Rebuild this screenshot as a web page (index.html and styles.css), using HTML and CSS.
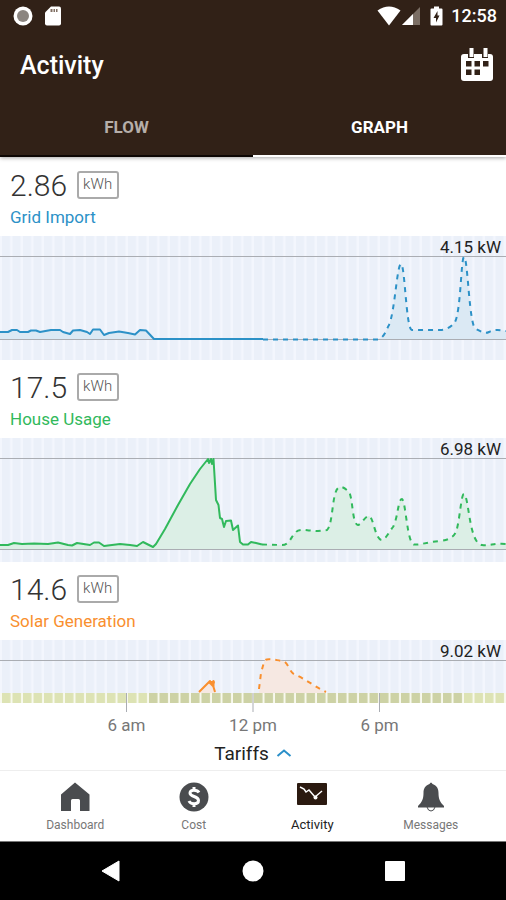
FILE: index.html
```html
<!DOCTYPE html>
<html lang="en">
<head>
    <meta charset="UTF-8">
    <meta name="viewport" content="width=device-width, initial-scale=1.0">
    <title>Activity</title>
    <link rel="stylesheet" href="styles.css">
</head>
<body>
    <header class="app-header">
        <div class="status-bar">
            <div class="status-group status-left">
                <svg width="20" height="20" viewBox="0 0 20 20"><circle cx="10" cy="10" r="9.5" fill="#fff"/><circle cx="10" cy="10" r="6" fill="#8b8580"/></svg>
                <svg width="16" height="20" viewBox="0 0 16 20"><path d="M6 0.500H14Q16 0.500 16 2.500V17.500Q16 19.500 14 19.500H2Q0 19.500 0 17.500V6.500Z" fill="#fff"/><path d="M5.500 3h2v3h-2zM8.500 3h1.500v3H8.500zM11 3h1.500v3H11z" fill="#806f63"/></svg>
            </div>
            <div class="status-group status-right">
                <svg width="24" height="20" viewBox="0 0 24 20"><path d="M0.500 4.500Q12-3.500 23.500 4.500L12 19.500Z" fill="#fff"/></svg>
                <svg width="18" height="20" viewBox="0 0 18 20"><path d="M0 19L18 1V19Z" fill="#7b6e64"/><path d="M0 19L11 8V19Z" fill="#fff"/></svg>
                <svg class="battery" width="13" height="20" viewBox="0 0 13 20"><path d="M4 0.500h5v2h2.500q1 0 1 1v15q0 1-1 1h-10q-1 0-1-1v-15q0-1 1-1H4z" fill="#fff"/><path d="M7.500 5L3.500 12H6v4.500L9.500 9.500H7.500z" fill="#312117"/></svg>
                <span class="clock">12:58</span>
            </div>
        </div>
        <div class="title-bar">
            <h1>Activity</h1>
            <button class="calendar-button" type="button" aria-label="Choose date">
                <svg width="34" height="34" viewBox="0 0 34 34">
                    <path d="M4 6H30Q33 6 33 9V30Q33 33 30 33H4Q1 33 1 30V9Q1 6 4 6Z" fill="#fff"/>
                    <path d="M8 1h6v9H8zM22 1h6v9h-6z" fill="#312117"/>
                    <path d="M9.500 0h4v9h-4zM23.500 0h4v9h-4z" fill="#fff"/>
                    <path d="M6 13h5.500v5.500H6zM14.500 13h5.500v5.500h-5.500zM23 13h5.500v5.500H23zM6 21.500h5.500V27H6zM14.500 21.500h5.500V27h-5.500z" fill="#312117"/>
                </svg>
            </button>
        </div>
        <div class="tabs" role="tablist">
            <button class="tab" type="button" role="tab" aria-selected="false">FLOW</button>
            <button class="tab active" type="button" role="tab" aria-selected="true">GRAPH</button>
        </div>
    </header>

    <main class="content">
        <section class="panel grid-import">
            <div class="panel-head">
                <div class="reading"><span class="value">2.86</span><span class="unit">kWh</span></div>
                <h2>Grid Import</h2>
            </div>
            <div class="chart">
                <span class="peak">4.15 kW</span>
                <svg viewBox="0 0 506 124" preserveAspectRatio="none">
                    <defs>
                        <pattern id="stripes" x="2" y="0" width="10.5" height="124" patternUnits="userSpaceOnUse">
                            <rect width="10.5" height="124" fill="#f3f6fd"/>
                            <rect width="8" height="124" fill="#ebf0f9"/>
                        </pattern>
                    </defs>
                    <rect width="506" height="124" fill="url(#stripes)"/>
                    <path class="rule" d="M0 20.500H506M0 103.500H506"/>
                    <path class="area" d="M0 96L8 96L12 94L17 94L20 96L28 96L31 94.500L36 94.500L40 96L51 94L60 94L63 96L70 98L73 94.500L80 94L87 96L90 98L93 93.500L100 93.500L104 99L109 97L119 95.500L128 97L135 98.500L140 94L146 94.500L154 103H0Z"/>
                    <path class="area" d="M378 103C385 101 386 94 389 89C395 75 397 28 401 28C405 28 406 94 412 94L440 94C447 94 452 90 455 86C461 74 461 21 464 21C468 21 469 92 476 93C482 96 485 98 489 96C495 93 500 94 506 95V103Z"/>
                    <path class="line" d="M0 96L8 96L12 94L17 94L20 96L28 96L31 94.500L36 94.500L40 96L51 94L60 94L63 96L70 98L73 94.500L80 94L87 96L90 98L93 93.500L100 93.500L104 99L109 97L119 95.500L128 97L135 98.500L140 94L146 94.500L154 103H263"/>
                    <path class="line forecast" d="M263 103.500H378C385 101 386 94 389 89C395 75 397 28 401 28C405 28 406 94 412 94L440 94C447 94 452 90 455 86C461 74 461 21 464 21C468 21 469 92 476 93C482 96 485 98 489 96C495 93 500 94 506 95"/>
                </svg>
            </div>
        </section>

        <section class="panel house-usage">
            <div class="panel-head">
                <div class="reading"><span class="value">17.5</span><span class="unit">kWh</span></div>
                <h2>House Usage</h2>
            </div>
            <div class="chart">
                <span class="peak">6.98 kW</span>
                <svg viewBox="0 0 506 124" preserveAspectRatio="none">
                    <rect width="506" height="124" fill="url(#stripes)"/>
                    <path class="rule" d="M0 20.500H506M0 111.500H506"/>
                    <path class="area" d="M0 107L8 107L14 105L22 106L34 105.500L48 106L58 104.500L68 107L72 107.500L77 105L90 107L94 104.500L99 104.500L104 108L112 107L120 106L130 107L137 108L143 104L150 107.500L153 109L156 106L165 91L178 67L190 46L200 31L208 21L213.500 21L216 62L218.500 67L220 80L224 88L226 83L231 82.500L233 92L238 87.500L240 104L243 106.500L248 106.500L251 104L256 105L262 106.500L282 107C290 107 291 98 296 94C300 90 308 93 318 93L327 92C333 87 332 55 338 50C341 47 346 51 349 54C353 60 352 86 358 87C362 86 365 78 369 78C374 80 375 102 382 102C386 101 389 94 393 89C398 80 398 61 402 61C406 64 407 105 414 106.500C421 107 427 104 440 103C448 102 453 100 456 94C460 82 461 56 464 56C469 58 469 106 482 107C490 108 494 105 506 106V111H0Z"/>
                    <path class="line" d="M0 107L8 107L14 105L22 106L34 105.500L48 106L58 104.500L68 107L72 107.500L77 105L90 107L94 104.500L99 104.500L104 108L112 107L120 106L130 107L137 108L143 104L150 107.500L153 109L156 106L165 91L178 67L190 46L200 31L208 21L209 25L211 21L212 26L213.500 21L216 62L218.500 67L220 80L222 81L224 89L226 83L231 82.500L233 92L238 87.500L240 104L243 106.500L248 106.500L251 104L256 105L262 106.500"/>
                    <path class="line forecast" d="M262 106.500L282 107C290 107 291 98 296 94C300 90 308 93 318 93L327 92C333 87 332 55 338 50C341 47 346 51 349 54C353 60 352 86 358 87C362 86 365 78 369 78C374 80 375 102 382 102C386 101 389 94 393 89C398 80 398 61 402 61C406 64 407 105 414 106.500C421 107 427 104 440 103C448 102 453 100 456 94C460 82 461 56 464 56C469 58 469 106 482 107C490 108 494 105 506 106"/>
                </svg>
            </div>
        </section>

        <section class="panel solar-generation">
            <div class="panel-head">
                <div class="reading"><span class="value">14.6</span><span class="unit">kWh</span></div>
                <h2>Solar Generation</h2>
            </div>
            <div class="chart chart-short">
                <span class="peak">9.02 kW</span>
                <svg viewBox="0 0 506 53" preserveAspectRatio="none">
                    <rect width="506" height="53" fill="url(#stripes)"/>
                    <path class="rule" d="M0 20.500H506"/>
                    <path class="area" d="M198 53L209 41L214 42L216 53ZM259 53L261 33L264 22C265 17 274 20 283 21C289 23 289 33 296 35L326 53Z"/>
                    <path class="line" d="M199 52L208 43L210 41L211 44L213.500 41V47L215 52M209 42H214L213 46Z"/>
                    <path class="line forecast" d="M259 49L261 33L264 22C265 17 274 20 283 21C289 23 289 33 296 35C305 39 314 46 326 52"/>
                </svg>
            </div>
        </section>

        <div class="time-axis">
            <svg viewBox="0 0 506 20" preserveAspectRatio="none">
                <defs>
                    <pattern id="off-peak" x="2" y="0" width="10.5" height="10" patternUnits="userSpaceOnUse"><rect width="8.500" height="10" fill="#dde3b4"/></pattern>
                    <pattern id="peak" x="2" y="0" width="10.5" height="10" patternUnits="userSpaceOnUse"><rect width="8.500" height="10" fill="#cdd2a5"/></pattern>
                </defs>
                <rect width="506" height="10" fill="#f8f9ee"/>
                <rect x="2" width="147" height="10" fill="url(#off-peak)"/>
                <rect x="149" width="315" height="10" fill="url(#peak)"/>
                <rect x="464" width="41" height="10" fill="url(#off-peak)"/>
                <path class="rule" d="M126.500 0V19M253 0V19M379.500 0V19"/>
            </svg>
            <div class="hours"><span>6 am</span><span>12 pm</span><span>6 pm</span></div>
        </div>

        <button class="tariffs" type="button">
            Tariffs
            <svg width="16" height="10" viewBox="0 0 16 10"><path d="M1.500 7L8 1.500L14.500 7" fill="none" stroke="#2a8fc9" stroke-width="2"/></svg>
        </button>
    </main>

    <nav class="bottom-nav">
        <a href="#dashboard">
            <svg width="30" height="30" viewBox="0 0 30 30"><path d="M15 0.500L29.500 12.500V29H20V18.500Q20 17 18.500 17H12.500Q11 17 11 18.500V29H1V12.500Z" fill="#4a4c4f"/></svg>
            <span>Dashboard</span>
        </a>
        <a href="#cost">
            <svg width="30" height="30" viewBox="0 0 30 30"><circle cx="15" cy="15" r="14.500" fill="#4a4c4f"/><path d="M20 10.500C18.500 8 11 7 11 11C11 15.500 19.500 13.500 19.500 18.500C19.500 23 11.500 22.500 10 19M15 5V8M15 22V25" fill="none" stroke="#fff" stroke-width="3"/></svg>
            <span>Cost</span>
        </a>
        <a class="active" href="#activity" aria-current="page">
            <svg width="30" height="30" viewBox="0 0 30 30"><rect y="1" width="30" height="22" rx="1" fill="#2b1a10"/><path d="M3 5L7 7L9 10L12 8L18 15L25 9" fill="none" stroke="#fff" stroke-width="1.500"/><circle cx="18.500" cy="15.500" r="2" fill="#fff"/></svg>
            <span>Activity</span>
        </a>
        <a href="#messages">
            <svg width="30" height="30" viewBox="0 0 30 30"><path d="M11 25Q12 29 15 29Q18 29 19 25" fill="none" stroke="#4a4c4f"/><path d="M13.500 2Q15-1 16.500 2C21 3.500 22.500 7 22.500 11C22.500 17 24 20 28 24V25.500H2V24C6 20 7.500 17 7.500 11C7.500 7 9 3.500 13.500 2Z" fill="#4a4c4f"/></svg>
            <span>Messages</span>
        </a>
    </nav>

    <div class="system-nav">
        <button type="button" aria-label="Back"><svg width="22" height="22" viewBox="0 0 22 22"><path d="M19 1V21L2 11Z" fill="#fff" stroke="#fff" stroke-linejoin="round"/></svg></button>
        <button type="button" aria-label="Home"><svg width="22" height="22" viewBox="0 0 22 22"><circle cx="11" cy="11" r="10.500" fill="#fff"/></svg></button>
        <button type="button" aria-label="Recent apps"><svg width="22" height="22" viewBox="0 0 22 22"><rect x="1" y="1" width="20" height="20" rx="1" fill="#fff"/></svg></button>
    </div>
</body>
</html>
```
FILE: styles.css
```css
* {
    box-sizing: border-box;
}

body {
    margin: 0;
    min-height: 100vh;
    display: flex;
    flex-direction: column;
    font-family: Roboto, "Liberation Sans", sans-serif;
    color: #222;
    background: #fff;
}

button {
    padding: 0;
    border: 0;
    background: none;
    font-family: inherit;
}

svg {
    display: block;
}

.app-header {
    background: #312117;
    color: #fff;
    box-shadow: 0 1px 4px rgba(0, 0, 0, 0.35);
}

.status-bar {
    display: flex;
    justify-content: space-between;
    align-items: center;
    height: 31px;
    padding: 0 9px 0 13px;
}

.status-group {
    display: flex;
    align-items: center;
}

.status-left {
    gap: 12px;
}

.status-right {
    gap: 1px;
}

.battery {
    margin: 0 7px 0 9px;
}

.clock {
    font-size: 18px;
    font-weight: 500;
}

.title-bar {
    display: flex;
    justify-content: space-between;
    align-items: center;
    height: 68px;
    padding: 0 12px 0 20px;
}

h1 {
    margin: 0;
    font-size: 25px;
    font-weight: 500;
}

.tabs {
    display: grid;
    grid-template-columns: 1fr 1fr;
    height: 58px;
}

.tab {
    border-bottom: 2px solid #0d0704;
    color: #b5aea9;
    font-size: 17px;
    font-weight: 700;
}

.tab.active {
    color: #fff;
    border-bottom-color: #fff;
}

.content {
    flex: 1;
    display: flex;
    flex-direction: column;
}

.panel-head {
    height: 78px;
    padding: 9px 10px 0;
}

.panel:first-child .panel-head {
    height: 79px;
    padding-top: 10px;
}

.reading {
    display: flex;
    align-items: center;
    gap: 10px;
    height: 36px;
}

.value {
    font-size: 30px;
    font-weight: 300;
    color: #333;
}

.unit {
    height: 28px;
    padding: 0 5px 0 4px;
    border: 2px solid #aaa;
    border-radius: 3px;
    font-size: 15px;
    font-weight: 300;
    line-height: 22px;
    color: #555;
}

h2 {
    margin: 4px 0 0;
    font-size: 17px;
    line-height: 20px;
    font-weight: 400;
}

.grid-import {
    color: #2c91c7;
}

.house-usage {
    color: #31b95c;
}

.solar-generation {
    color: #f98f2e;
}

.chart {
    position: relative;
    height: 124px;
}

.chart-short {
    height: 53px;
}

.chart svg {
    width: 100%;
    height: 100%;
}

.peak {
    position: absolute;
    top: 0;
    right: 5px;
    font-size: 17px;
    line-height: 22px;
    color: #222;
}

.rule {
    fill: none;
    stroke: #aaadb3;
}

.area {
    fill: #dbe9f4;
}

.house-usage .area {
    fill: #dcefe6;
}

.solar-generation .area {
    fill: #f6e8e2;
}

.line {
    fill: none;
    stroke: currentColor;
    stroke-width: 2;
    stroke-linejoin: round;
}

.forecast {
    stroke-dasharray: 5 5;
}

.time-axis svg {
    width: 100%;
    height: 20px;
}

.hours {
    display: grid;
    grid-template-columns: repeat(3, 1fr);
    padding: 0 12.5%;
    font-size: 17px;
    line-height: 25px;
    text-align: center;
    color: #777;
}

.tariffs {
    display: flex;
    align-items: center;
    align-self: center;
    gap: 7px;
    height: 31px;
    font-size: 19px;
    color: #222;
}

.bottom-nav {
    display: grid;
    grid-template-columns: repeat(4, 1fr);
    height: 72px;
    padding: 11px 16px 0;
    border-top: 1px solid #eee;
    border-bottom: 1px solid #777;
}

.bottom-nav a {
    display: flex;
    flex-direction: column;
    align-items: center;
    gap: 5px;
    font-size: 12px;
    line-height: 16px;
    color: #777;
    text-decoration: none;
}

.bottom-nav .active {
    font-size: 13px;
    color: #222;
}

.system-nav {
    display: flex;
    justify-content: center;
    align-items: center;
    gap: 120px;
    height: 58px;
    background: #000;
}
```
